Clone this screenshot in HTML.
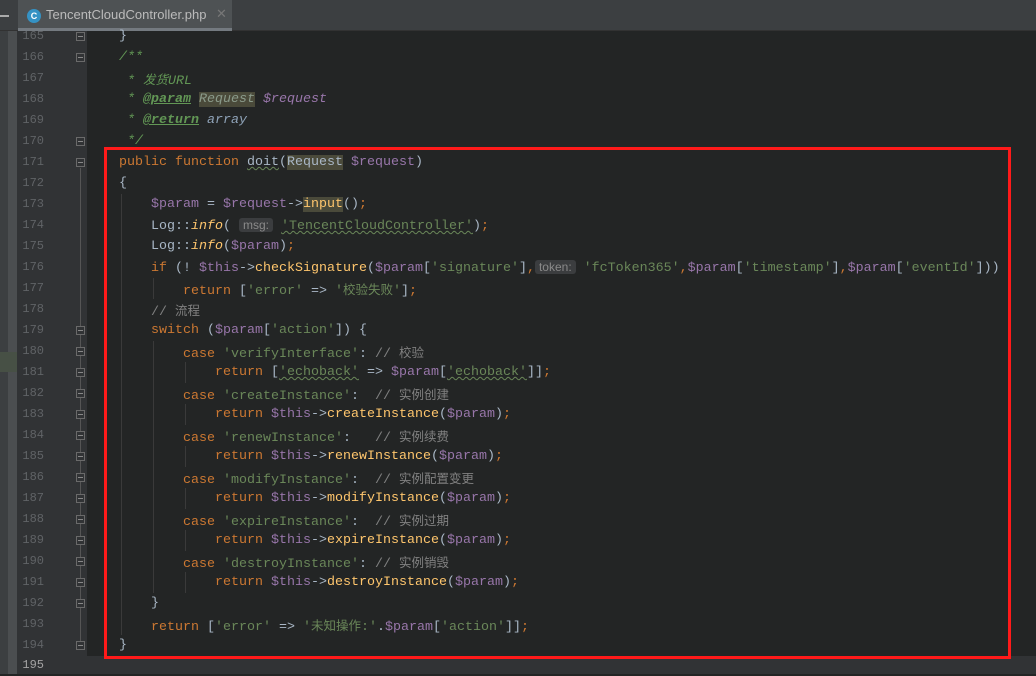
<!DOCTYPE html>
<html><head><meta charset="utf-8"><style>
*{margin:0;padding:0;box-sizing:border-box}
body{width:1036px;height:674px;overflow:hidden;background:#232525;position:relative;font-family:"Liberation Mono","Noto Sans CJK SC",monospace;}
#tabbar{position:absolute;left:0;top:0;width:1036px;height:31px;background:#3c3f41;border-bottom:1px solid #323232}
#tab{position:absolute;left:18px;top:0;width:214px;height:31px;background:#4e5254;border-bottom:3px solid #4a88c7;border-bottom-color:#747a80}
#tab .ic{position:absolute;left:9px;top:9px;width:14px;height:14px;border-radius:50%;background:#3592c4;color:#fff;font:bold 9px "Liberation Sans",sans-serif;text-align:center;line-height:14px}
#tab .t{position:absolute;left:28px;top:7px;font:13px "Liberation Sans",sans-serif;color:#bbbbbb}
#tab .x{position:absolute;left:198px;top:6px;font:13px "Liberation Sans",sans-serif;color:#777}
#dash{position:absolute;left:0;top:15px;width:9px;height:2px;background:#aaa}
#lstrip{position:absolute;left:0;top:31px;width:8px;height:643px;background:#3c3f41}
#lstrip2{position:absolute;left:8px;top:31px;width:9px;height:643px;background:#4b4e50}
#hl{position:absolute;left:0;top:352px;width:17px;height:20px;background:#475045}
#gutter{position:absolute;left:17px;top:31px;width:70px;height:643px;background:#313335}
#cur{position:absolute;left:17px;top:656px;width:1019px;height:18px;background:#313335}
.ln{position:absolute;left:17px;width:27px;text-align:right;font-size:12px;color:#606366;line-height:21px;height:21px}
.fold{position:absolute;left:76px;width:9px;height:9px;border:1px solid #6a6a6a;background:#313335}
.fold:after{content:"";position:absolute;left:1px;top:3px;width:5px;height:1px;background:#888}
#foldline{position:absolute;left:80px;top:168px;width:1px;height:480px;background:#555}
.l{position:absolute;left:87px;white-space:pre;font-size:13.33px;line-height:21px;height:21px;color:#a9b7c6}
.k{color:#cc7832}.v{color:#9876aa}.s{color:#6a8759}.c{color:#808080}.f{color:#ffc66d}.d{color:#629755;font-style:italic}
.i{font-style:italic}.u{text-decoration:underline}.w{text-decoration:underline wavy #6a8759;text-decoration-thickness:1px}
.hb{background:#4a4a3a}
.h{background:#3b3d3f;color:#8a8a8a;font-family:"Liberation Sans",sans-serif;font-size:12px;border-radius:3px;padding:0 4px}
.cj{font-family:"Noto Sans CJK SC",sans-serif;font-size:12.5px}
.g{position:absolute;width:1px;background:#3a3a3a}
#box{position:absolute;left:104px;top:147px;width:907px;height:512px;border:3px solid #ff1a1a}
</style></head><body>
<div id="tabbar"><div id="dash"></div><div id="tab"><div class="ic">C</div><div class="t">TencentCloudController.php</div><div class="x">✕</div></div></div>
<div id="lstrip"></div><div id="lstrip2"></div><div id="hl"></div>
<div id="gutter"></div>
<div id="cur"></div>
<div id="foldline"></div>

<div class="ln" style="top:26px">165</div>
<div class="ln" style="top:47px">166</div>
<div class="ln" style="top:68px">167</div>
<div class="ln" style="top:89px">168</div>
<div class="ln" style="top:110px">169</div>
<div class="ln" style="top:131px">170</div>
<div class="ln" style="top:152px">171</div>
<div class="ln" style="top:173px">172</div>
<div class="ln" style="top:194px">173</div>
<div class="ln" style="top:215px">174</div>
<div class="ln" style="top:236px">175</div>
<div class="ln" style="top:257px">176</div>
<div class="ln" style="top:278px">177</div>
<div class="ln" style="top:299px">178</div>
<div class="ln" style="top:320px">179</div>
<div class="ln" style="top:341px">180</div>
<div class="ln" style="top:362px">181</div>
<div class="ln" style="top:383px">182</div>
<div class="ln" style="top:404px">183</div>
<div class="ln" style="top:425px">184</div>
<div class="ln" style="top:446px">185</div>
<div class="ln" style="top:467px">186</div>
<div class="ln" style="top:488px">187</div>
<div class="ln" style="top:509px">188</div>
<div class="ln" style="top:530px">189</div>
<div class="ln" style="top:551px">190</div>
<div class="ln" style="top:572px">191</div>
<div class="ln" style="top:593px">192</div>
<div class="ln" style="top:614px">193</div>
<div class="ln" style="top:635px">194</div>
<div class="ln" style="top:655px;color:#a4a3a3">195</div>

<div class="fold" style="top:32px"></div>
<div class="fold" style="top:53px"></div>
<div class="fold" style="top:137px"></div>
<div class="fold" style="top:158px"></div>
<div class="fold" style="top:326px"></div>
<div class="fold" style="top:347px"></div>
<div class="fold" style="top:368px"></div>
<div class="fold" style="top:389px"></div>
<div class="fold" style="top:410px"></div>
<div class="fold" style="top:431px"></div>
<div class="fold" style="top:452px"></div>
<div class="fold" style="top:473px"></div>
<div class="fold" style="top:494px"></div>
<div class="fold" style="top:515px"></div>
<div class="fold" style="top:536px"></div>
<div class="fold" style="top:557px"></div>
<div class="fold" style="top:578px"></div>
<div class="fold" style="top:599px"></div>
<div class="fold" style="top:641px"></div>

<div class="g" style="left:121px;top:194px;height:441px"></div>
<div class="g" style="left:153px;top:278px;height:21px"></div>
<div class="g" style="left:153px;top:341px;height:252px"></div>
<div class="g" style="left:185px;top:362px;height:21px"></div>
<div class="g" style="left:185px;top:404px;height:21px"></div>
<div class="g" style="left:185px;top:446px;height:21px"></div>
<div class="g" style="left:185px;top:488px;height:21px"></div>
<div class="g" style="left:185px;top:530px;height:21px"></div>
<div class="g" style="left:185px;top:572px;height:21px"></div>

<div class="l" style="top:26px">    }</div>
<div class="l d" style="top:47px">    /**</div>
<div class="l d" style="top:68px">     * <span class="cj">发货</span>URL</div>
<div class="l d" style="top:89px">     * <b class="u">@param</b> <span class="hb" style="color:#8a9a8a">Request</span> <span class="v">$request</span></div>
<div class="l d" style="top:110px">     * <b class="u">@return</b> <span style="color:#8fa3b8">array</span></div>
<div class="l d" style="top:131px">     */</div>
<div class="l" style="top:152px">    <span class="k">public function</span> <span class="w" style="text-decoration-color:#6a8759">doit</span>(<span class="hb">Request</span> <span class="v">$request</span>)</div>
<div class="l" style="top:173px">    {</div>
<div class="l" style="top:194px">        <span class="v">$param</span> = <span class="v">$request</span>-&gt;<span class="f hb">input</span>()<span class="k">;</span></div>
<div class="l" style="top:215px">        Log::<span class="f i">info</span>( <span class="h">msg:</span> <span class="s w">'TencentCloudController'</span>)<span class="k">;</span></div>
<div class="l" style="top:236px">        Log::<span class="f i">info</span>(<span class="v">$param</span>)<span class="k">;</span></div>
<div class="l" style="top:257px">        <span class="k">if</span> (! <span class="v">$this</span>-&gt;<span class="f">checkSignature</span>(<span class="v">$param</span>[<span class="s">'signature'</span>]<span class="k">,</span><span class="h">token:</span> <span class="s">'fcToken365'</span><span class="k">,</span><span class="v">$param</span>[<span class="s">'timestamp'</span>]<span class="k">,</span><span class="v">$param</span>[<span class="s">'eventId'</span>]))</div>
<div class="l" style="top:278px">            <span class="k">return</span> [<span class="s">'error'</span> =&gt; <span class="s">'<span class="cj">校验失败</span>'</span>]<span class="k">;</span></div>
<div class="l c" style="top:299px">        // <span class="cj">流程</span></div>
<div class="l" style="top:320px">        <span class="k">switch</span> (<span class="v">$param</span>[<span class="s">'action'</span>]) {</div>
<div class="l" style="top:341px">            <span class="k">case</span> <span class="s">'verifyInterface'</span>: <span class="c">// <span class="cj">校验</span></span></div>
<div class="l" style="top:362px">                <span class="k">return</span> [<span class="s w">'echoback'</span> =&gt; <span class="v">$param</span>[<span class="s w">'echoback'</span>]]<span class="k">;</span></div>
<div class="l" style="top:383px">            <span class="k">case</span> <span class="s">'createInstance'</span>:  <span class="c">// <span class="cj">实例创建</span></span></div>
<div class="l" style="top:404px">                <span class="k">return</span> <span class="v">$this</span>-&gt;<span class="f">createInstance</span>(<span class="v">$param</span>)<span class="k">;</span></div>
<div class="l" style="top:425px">            <span class="k">case</span> <span class="s">'renewInstance'</span>:   <span class="c">// <span class="cj">实例续费</span></span></div>
<div class="l" style="top:446px">                <span class="k">return</span> <span class="v">$this</span>-&gt;<span class="f">renewInstance</span>(<span class="v">$param</span>)<span class="k">;</span></div>
<div class="l" style="top:467px">            <span class="k">case</span> <span class="s">'modifyInstance'</span>:  <span class="c">// <span class="cj">实例配置变更</span></span></div>
<div class="l" style="top:488px">                <span class="k">return</span> <span class="v">$this</span>-&gt;<span class="f">modifyInstance</span>(<span class="v">$param</span>)<span class="k">;</span></div>
<div class="l" style="top:509px">            <span class="k">case</span> <span class="s">'expireInstance'</span>:  <span class="c">// <span class="cj">实例过期</span></span></div>
<div class="l" style="top:530px">                <span class="k">return</span> <span class="v">$this</span>-&gt;<span class="f">expireInstance</span>(<span class="v">$param</span>)<span class="k">;</span></div>
<div class="l" style="top:551px">            <span class="k">case</span> <span class="s">'destroyInstance'</span>: <span class="c">// <span class="cj">实例销毁</span></span></div>
<div class="l" style="top:572px">                <span class="k">return</span> <span class="v">$this</span>-&gt;<span class="f">destroyInstance</span>(<span class="v">$param</span>)<span class="k">;</span></div>
<div class="l" style="top:593px">        }</div>
<div class="l" style="top:614px">        <span class="k">return</span> [<span class="s">'error'</span> =&gt; <span class="s">'<span class="cj">未知操作</span>:'</span>.<span class="v">$param</span>[<span class="s">'action'</span>]]<span class="k">;</span></div>
<div class="l" style="top:635px">    }</div>

<div id="box"></div>
</body></html>
